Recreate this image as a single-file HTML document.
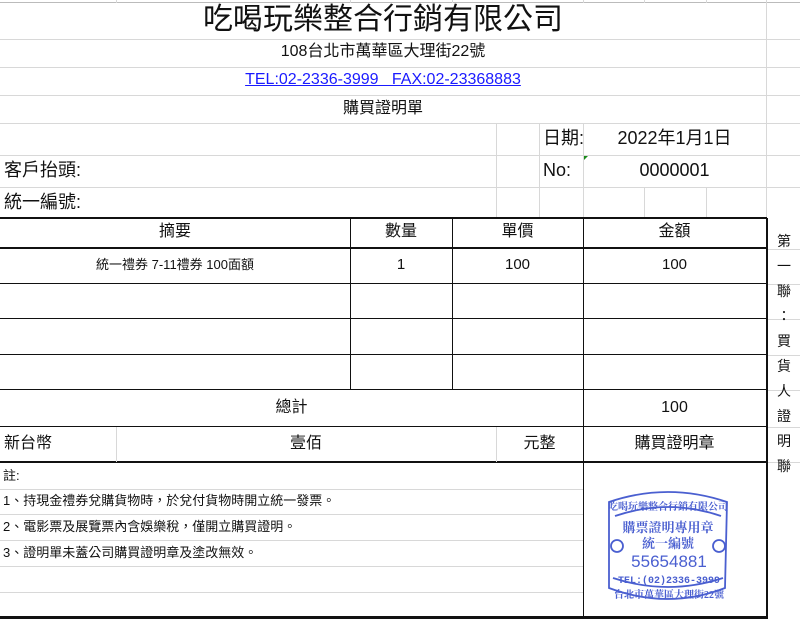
<!DOCTYPE html>
<html><head><meta charset="utf-8"><style>
body{margin:0;width:800px;height:619px;background:#fff;overflow:hidden;position:relative;font-family:"Liberation Sans","Noto Sans CJK TC",sans-serif;color:#111}
.h{position:absolute;left:0;height:1px;background:#d8d8d8}
.v{position:absolute;width:1px;background:#d8d8d8}
.H{position:absolute;height:2px;background:#111}
.V{position:absolute;width:1px;background:#111}
.t{position:absolute;white-space:nowrap;line-height:1}
.c{text-align:center}
</style></head><body>
<div class="h" style="top:2px;width:800px;background:#bbb"></div>
<div class="h" style="top:39px;width:800px"></div>
<div class="h" style="top:67px;width:800px"></div>
<div class="h" style="top:95px;width:800px"></div>
<div class="h" style="top:123px;width:800px"></div>
<div class="h" style="top:155px;width:800px"></div>
<div class="h" style="top:187px;width:800px"></div>
<div class="v" style="left:766px;top:0;height:218px"></div>
<div class="v" style="left:496px;top:123px;height:95px"></div>
<div class="v" style="left:539px;top:123px;height:95px"></div>
<div class="v" style="left:583px;top:123px;height:95px"></div>
<div class="v" style="left:644px;top:187px;height:31px"></div>
<div class="v" style="left:706px;top:187px;height:31px"></div>
<div class="v" style="left:116px;top:0;height:3px"></div>
<div class="v" style="left:350px;top:0;height:3px"></div>
<div class="v" style="left:452px;top:0;height:3px"></div>
<div class="v" style="left:583px;top:0;height:3px"></div>
<div class="v" style="left:644px;top:0;height:3px"></div>
<div class="v" style="left:706px;top:0;height:3px"></div>
<div class="t c" style="left:0;width:766px;top:5px;font-size:30px">吃喝玩樂整合行銷有限公司</div>
<div class="t c" style="left:0;width:766px;top:44px;font-size:16px">108台北市萬華區大理街22號</div>
<div class="t c" style="left:0;width:766px;top:72px;font-size:16px;color:#1a1aff;"><span style="text-decoration:underline">TEL:02-2336-3999&nbsp;&nbsp; FAX:02-23368883</span></div>
<div class="t c" style="left:0;width:766px;top:101px;font-size:16px">購買證明單</div>
<div class="t" style="left:543px;top:129px;font-size:18px">日期:</div>
<div class="t c" style="left:583px;width:183px;top:129px;font-size:18px">2022年1月1日</div>
<div class="t" style="left:4px;top:161px;font-size:18px">客戶抬頭:</div>
<div class="t" style="left:543px;top:161px;font-size:18px">No:</div>
<div class="t c" style="left:583px;width:183px;top:161px;font-size:18px">0000001</div>
<div style="position:absolute;left:584px;top:156px;width:0;height:0;border-top:4px solid #1a8a1a;border-right:4px solid transparent"></div>
<div class="t" style="left:4px;top:193px;font-size:18px">統一編號:</div>
<div class="H" style="left:0;top:217px;width:767px"></div>
<div class="H" style="left:0;top:247px;width:767px"></div>
<div class="H" style="left:0;top:283px;width:767px;height:1px"></div>
<div class="H" style="left:0;top:318px;width:767px;height:1px"></div>
<div class="H" style="left:0;top:354px;width:767px;height:1px"></div>
<div class="H" style="left:0;top:389px;width:767px;height:1px"></div>
<div class="H" style="left:0;top:426px;width:767px;height:1px"></div>
<div class="H" style="left:0;top:461px;width:767px"></div>
<div class="H" style="left:0;top:616px;width:767px;height:3px"></div>
<div class="V" style="left:350px;top:218px;height:172px"></div>
<div class="V" style="left:452px;top:218px;height:172px"></div>
<div class="V" style="left:583px;top:218px;height:401px"></div>
<div class="V" style="left:766px;top:218px;height:401px;width:2px"></div>
<div class="v" style="left:116px;top:427px;height:35px"></div>
<div class="v" style="left:496px;top:427px;height:35px"></div>
<div class="h" style="top:489px;width:583px"></div>
<div class="h" style="top:514px;width:583px"></div>
<div class="h" style="top:540px;width:583px"></div>
<div class="h" style="top:566px;width:583px"></div>
<div class="h" style="top:592px;width:583px"></div>
<div class="h" style="top:249px;left:768px;width:32px"></div>
<div class="h" style="top:284px;left:768px;width:32px"></div>
<div class="h" style="top:319px;left:768px;width:32px"></div>
<div class="h" style="top:355px;left:768px;width:32px"></div>
<div class="h" style="top:390px;left:768px;width:32px"></div>
<div class="h" style="top:427px;left:768px;width:32px"></div>
<div class="h" style="top:462px;left:768px;width:32px"></div>
<div class="t c" style="left:0;width:350px;top:224px;font-size:16px">摘要</div>
<div class="t c" style="left:350px;width:102px;top:224px;font-size:16px">數量</div>
<div class="t c" style="left:452px;width:131px;top:224px;font-size:16px">單價</div>
<div class="t c" style="left:583px;width:183px;top:224px;font-size:16px">金額</div>
<div class="t c" style="left:0;width:350px;top:258px;font-size:13px">統一禮券 7-11禮券 100面額</div>
<div class="t c" style="left:350px;width:102px;top:257px;font-size:15px">1</div>
<div class="t c" style="left:452px;width:131px;top:257px;font-size:15px">100</div>
<div class="t c" style="left:583px;width:183px;top:257px;font-size:15px">100</div>
<div class="t c" style="left:0;width:583px;top:400px;font-size:16px">總計</div>
<div class="t c" style="left:583px;width:183px;top:400px;font-size:16px">100</div>
<div class="t" style="left:4px;top:436px;font-size:16px">新台幣</div>
<div class="t c" style="left:116px;width:380px;top:436px;font-size:16px">壹佰</div>
<div class="t c" style="left:496px;width:87px;top:436px;font-size:16px">元整</div>
<div class="t c" style="left:583px;width:183px;top:436px;font-size:16px">購買證明章</div>
<div class="t" style="left:3px;top:469px;font-size:13px">註:</div>
<div class="t" style="left:3px;top:494px;font-size:13px">1、持現金禮券兌購貨物時，於兌付貨物時開立統一發票。</div>
<div class="t" style="left:3px;top:520px;font-size:13px">2、電影票及展覽票內含娛樂稅，僅開立購買證明。</div>
<div class="t" style="left:3px;top:546px;font-size:13px">3、證明單未蓋公司購買證明章及塗改無效。</div>
<div class="t c" style="left:768px;width:32px;top:229px;font-size:14px;line-height:25px;white-space:normal">第<br>一<br>聯<br>：<br>買<br>貨<br>人<br>證<br>明<br>聯</div>
<svg style="position:absolute;left:603px;top:486px" width="130" height="122" viewBox="0 0 130 122">
<g fill="none" stroke="#4a5fd0" stroke-width="1.8">
<path d="M6 16 Q65 -4 124 16 L122 102 Q65 124 6 102 Z"/>
<path d="M12 30 Q65 12 118 30"/>
<path d="M10 92 Q65 110 120 92"/>
<circle cx="14" cy="60" r="6"/><circle cx="116" cy="60" r="6"/>
</g>
<g fill="#4a5fd0" font-family="Liberation Serif,'Noto Serif CJK SC',serif" text-anchor="middle">
<text x="65" y="24" font-size="10" font-weight="bold">吃喝玩樂整合行銷有限公司</text>
<text x="65" y="46" font-size="13" font-weight="bold">購票證明專用章</text>
<text x="65" y="62" font-size="13" font-weight="bold">統一編號</text>
<text x="66" y="81" font-size="17" font-family="Liberation Sans,sans-serif">55654881</text>
<text x="66" y="97" font-size="10" font-weight="bold" font-family="Liberation Mono,monospace">TEL:(02)2336-3999</text>
<text x="66" y="112" font-size="10" font-weight="bold">台北市萬華區大理街22號</text>
</g>
</svg>
</body></html>
